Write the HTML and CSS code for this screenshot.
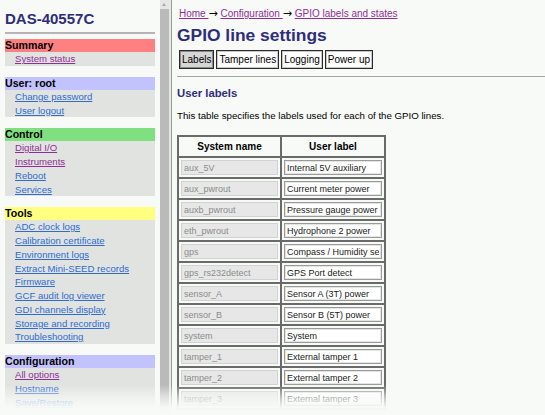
FILE: index.html
```html
<!DOCTYPE html>
<html>
<head>
<meta charset="utf-8">
<title>GPIO line settings</title>
<link rel="stylesheet" href="styles.css">
</head>
<body>
<div class="frames">
  <nav class="side">
    <div class="host">DAS-40557C</div>
    <div class="rule"></div>
    <section class="menu">
      <div class="menu-head red">Summary</div>
      <ul class="menu-list">
        <li><a class="visited" href="#">System status</a></li>
      </ul>
    </section>
    <section class="menu">
      <div class="menu-head violet">User: root</div>
      <ul class="menu-list">
        <li><a href="#">Change password</a></li>
        <li><a href="#">User logout</a></li>
      </ul>
    </section>
    <section class="menu">
      <div class="menu-head green">Control</div>
      <ul class="menu-list">
        <li><a class="visited" href="#">Digital I/O</a></li>
        <li><a class="visited" href="#">Instruments</a></li>
        <li><a href="#">Reboot</a></li>
        <li><a href="#">Services</a></li>
      </ul>
    </section>
    <section class="menu">
      <div class="menu-head yellow">Tools</div>
      <ul class="menu-list">
        <li><a href="#">ADC clock logs</a></li>
        <li><a href="#">Calibration certificate</a></li>
        <li><a href="#">Environment logs</a></li>
        <li><a href="#">Extract Mini-SEED records</a></li>
        <li><a href="#">Firmware</a></li>
        <li><a href="#">GCF audit log viewer</a></li>
        <li><a href="#">GDI channels display</a></li>
        <li><a href="#">Storage and recording</a></li>
        <li><a href="#">Troubleshooting</a></li>
      </ul>
    </section>
    <section class="menu">
      <div class="menu-head violet">Configuration</div>
      <ul class="menu-list">
        <li><a class="visited" href="#">All options</a></li>
        <li><a href="#">Hostname</a></li>
        <li><a href="#">Save/Restore</a></li>
      </ul>
    </section>
  </nav>
  <div class="vscroll"><div class="vscroll-arrow"></div><div class="vscroll-track"></div></div>
  <div class="frame-gap"></div>
  <div class="frame-border"></div>
  <main class="content">
    <div class="crumbs"><a href="#">Home </a><span class="arrow">→</span> <a href="#">Configuration </a><span class="arrow">→</span> <a href="#">GPIO labels and states</a></div>
    <h1 class="title">GPIO line settings</h1>
    <div class="tabs">
      <button class="tab active">Labels</button>
      <button class="tab">Tamper lines</button>
      <button class="tab">Logging</button>
      <button class="tab">Power up</button>
    </div>
    <div class="sep"></div>
    <h2 class="sub">User labels</h2>
    <p class="desc">This table specifies the labels used for each of the GPIO lines.</p>
    <table class="gpio">
      <thead>
        <tr><th class="c1">System name</th><th class="c2">User label</th></tr>
      </thead>
      <tbody>
        <tr><td><input class="sys" disabled value="aux_5V"></td><td><input class="lbl" value="Internal 5V auxiliary"></td></tr>
        <tr><td><input class="sys" disabled value="aux_pwrout"></td><td><input class="lbl" value="Current meter power"></td></tr>
        <tr><td><input class="sys" disabled value="auxb_pwrout"></td><td><input class="lbl" value="Pressure gauge power"></td></tr>
        <tr><td><input class="sys" disabled value="eth_pwrout"></td><td><input class="lbl" value="Hydrophone 2 power"></td></tr>
        <tr><td><input class="sys" disabled value="gps"></td><td><input class="lbl" value="Compass / Humidity sensor"></td></tr>
        <tr><td><input class="sys" disabled value="gps_rs232detect"></td><td><input class="lbl" value="GPS Port detect"></td></tr>
        <tr><td><input class="sys" disabled value="sensor_A"></td><td><input class="lbl" value="Sensor A (3T) power"></td></tr>
        <tr><td><input class="sys" disabled value="sensor_B"></td><td><input class="lbl" value="Sensor B (5T) power"></td></tr>
        <tr><td><input class="sys" disabled value="system"></td><td><input class="lbl" value="System"></td></tr>
        <tr><td><input class="sys" disabled value="tamper_1"></td><td><input class="lbl" value="External tamper 1"></td></tr>
        <tr><td><input class="sys" disabled value="tamper_2"></td><td><input class="lbl" value="External tamper 2"></td></tr>
        <tr><td><input class="sys" disabled value="tamper_3"></td><td><input class="lbl" value="External tamper 3"></td></tr>
      </tbody>
    </table>
  </main>
  <div class="fade"></div>
</div>
</body>
</html>
```

FILE: styles.css
```css
* { box-sizing: border-box; }

html, body {
  margin: 0;
  padding: 0;
  background: #f8faf8;
}

body {
  font-family: "Liberation Sans", Arial, sans-serif;
  color: #000;
}

.frames {
  position: relative;
  display: flex;
  width: 545px;
  height: 415px;
  overflow: hidden;
  background: #f8faf8;
}

/* ---------- left frame ---------- */
.side {
  width: 160px;
  flex: none;
  padding: 10px 5px 0 5px;
}

.host {
  font-size: 15px;
  line-height: 18px;
  font-weight: bold;
  color: #2e2e78;
  height: 22px;
}

.rule {
  height: 2px;
  background: #b4b4b4;
  margin-bottom: 5px;
}

.menu {
  margin-bottom: 11px;
}

.menu-head {
  font-size: 10.6px;
  font-weight: bold;
  line-height: 13px;
  height: 13px;
  color: #000;
}

.red { background: #ff8080; }
.violet { background: #c2c2ff; }
.green { background: #80e080; }
.yellow { background: #ffff80; }

.menu-list {
  list-style: none;
  margin: 0;
  padding: 0 0 0 10px;
  background: #e1e3e1;
}

.menu-list li {
  font-size: 9.6px;
  line-height: 13.75px;
  height: 13.75px;
}

.menu-list a {
  color: #2f6bd0;
  text-decoration: underline;
}

.menu-list a.visited {
  color: #8e2f95;
}

/* ---------- scrollbar & frame border ---------- */
.vscroll {
  width: 9px;
  flex: none;
  display: flex;
  flex-direction: column;
}

.vscroll-arrow {
  height: 9px;
  background: #e6e6e6;
  position: relative;
}

.vscroll-arrow::after {
  content: "";
  position: absolute;
  left: 2px;
  top: 3px;
  border-left: 2.5px solid transparent;
  border-right: 2.5px solid transparent;
  border-bottom: 3px solid #a8a8a8;
}

.vscroll-track {
  flex: 1;
  background: #bababa;
}

.frame-gap {
  width: 2px;
  flex: none;
  background: #e8e8e8;
}

.frame-border {
  width: 1px;
  flex: none;
  background: #9a9a9a;
}

/* ---------- main frame ---------- */
.content {
  flex: 1;
  min-width: 0;
  padding: 8px 0 0 5px;
}

.crumbs {
  font-size: 10px;
  line-height: 12px;
  height: 12px;
  color: #000;
  padding-left: 2px;
  white-space: nowrap;
}

.crumbs .arrow {
  font-family: "DejaVu Sans", sans-serif;
  font-size: 11px;
  line-height: 10px;
}

.crumbs a {
  color: #8e2f95;
  text-decoration: underline;
}

.title {
  margin: 5px 0 0 0;
  font-size: 17.4px;
  line-height: 20px;
  font-weight: bold;
  color: #2e2e78;
}

.tabs {
  display: flex;
  gap: 2px;
  margin: 5px 0 0 2px;
}

.tab {
  height: 19px;
  padding: 0 2px;
  margin: 0;
  font-family: "Liberation Sans", Arial, sans-serif;
  font-size: 10px;
  line-height: 15px;
  color: #000;
  background: #fdfdfd;
  border: 1px solid #2a2a2a;
  box-shadow: inset 0 0 0 1px #c8c8c8;
  border-radius: 0;
}

.tab.active {
  background: #d6d6d6;
  box-shadow: inset 0 0 0 1px #8a8a8a;
}

.sep {
  height: 1px;
  background: #a4a4a4;
  margin-top: 7px;
}

.sub {
  margin: 9px 0 0 0;
  font-size: 11.3px;
  line-height: 14px;
  font-weight: bold;
  color: #2e2e78;
}

.desc {
  margin: 10px 0 0 0;
  font-size: 9.7px;
  line-height: 12px;
}

.gpio {
  margin-top: 13px;
  border-collapse: separate;
  border-spacing: 0;
  border: 1px solid #6a6a6a;
  background: transparent;
}

.gpio th,
.gpio td {
  border: 1px solid #6a6a6a;
  padding: 2px;
}

.gpio th {
  font-size: 10px;
  font-weight: bold;
  line-height: 15px;
  text-align: center;
}

.gpio th.c1 { width: 103px; }
.gpio th.c2 { width: 104px; }

.gpio input {
  display: block;
  width: 100%;
  height: 15px;
  margin: 0;
  padding: 0 2px;
  font-family: "Liberation Sans", Arial, sans-serif;
  font-size: 9px;
  line-height: 13px;
  border-radius: 0;
  outline: none;
}

.gpio input.sys {
  background: #e6e7e6;
  border: 1px solid #d2d2d2;
  color: #8c8c8c;
}

.gpio input.lbl {
  background: #ffffff;
  border: 1px solid #9a9a9a;
  box-shadow: inset 0 0 0 1px #e4e4e4;
  color: #1a1a1a;
}

/* bottom fade over the screenshot */
.fade {
  position: absolute;
  left: 0;
  right: 0;
  bottom: 0;
  height: 30px;
  background: linear-gradient(to bottom,
    rgba(248, 250, 248, 0) 0%,
    rgba(248, 250, 248, 0.6) 40%,
    rgba(248, 250, 248, 0.97) 75%,
    #f8faf8 100%);
  pointer-events: none;
}
```
